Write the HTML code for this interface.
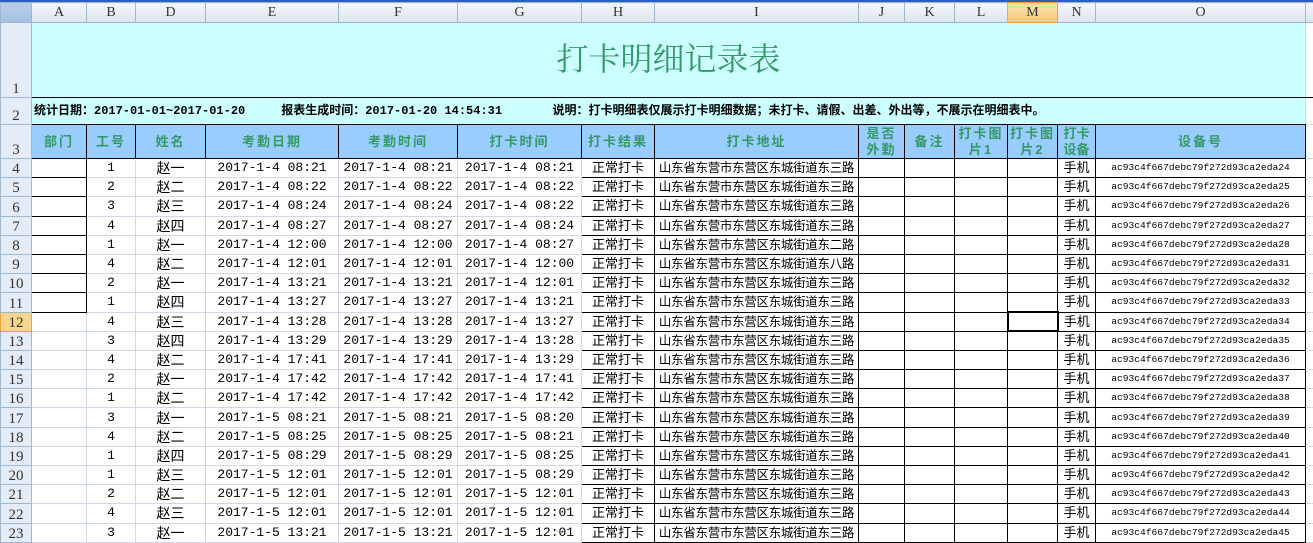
<!DOCTYPE html>
<html><head><meta charset="utf-8">
<style>
*{margin:0;padding:0;box-sizing:border-box}
body{width:1313px;height:528px;overflow:hidden;background:#fff;font-family:"Liberation Sans","Noto Sans CJK SC",sans-serif}
.top{position:absolute;left:0;top:0;width:1313px;height:2px;background:#2b5fbf}
table{position:absolute;left:0;top:2px;border-collapse:collapse;table-layout:fixed;width:1313px}
td{border:1px solid #d0d7e5;padding:0;white-space:nowrap;overflow:hidden;text-align:center;font-size:13px;color:#000;line-height:16px}
td.h{background:linear-gradient(#f4f6fa,#dde4ee);border-color:#9eb6ce;color:#333;font-family:"Liberation Serif","Noto Serif CJK SC",serif;font-size:14px;height:20px}
td.hm{background:linear-gradient(#fbe0b0,#f8c77a);border-color:#f2a23c}
td.r{background:#e4ecf7;border-color:#9eb6ce;color:#333;font-family:"Liberation Serif",serif;font-size:15px;vertical-align:bottom;text-align:center}
td.rm{background:#f9d48e;border-color:#f2a23c}
.c{background:#ccffff}
.k{border-color:#000}
.hd td.f{background:#99ccff;border:1px solid #000;color:#339966;font-weight:bold;font-size:13px;letter-spacing:2px;line-height:16px}
.m{font-family:"Liberation Mono","Noto Sans CJK SC",monospace;font-size:13px}
.z{font-family:"Liberation Sans","Noto Sans CJK SC",sans-serif;font-size:14px}
.a{font-size:12.5px;letter-spacing:-0.3px}
.id{font-family:"Liberation Mono",monospace;font-size:9.6px}
tr.d td{height:19.2px;line-height:16px}
</style></head><body>
<div class="top"></div>
<table>
<colgroup><col style="width:31px"><col style="width:55px"><col style="width:49px"><col style="width:70px"><col style="width:133px"><col style="width:119px"><col style="width:124px"><col style="width:73px"><col style="width:204px"><col style="width:46px"><col style="width:50px"><col style="width:53px"><col style="width:50px"><col style="width:38px"><col style="width:210px"><col style="width:8px"></colgroup>
<tr><td class="h" style="background:linear-gradient(#b9cde8,#a5bfe3)"></td><td class="h">A</td><td class="h">B</td><td class="h">D</td><td class="h">E</td><td class="h">F</td><td class="h">G</td><td class="h">H</td><td class="h">I</td><td class="h">J</td><td class="h">K</td><td class="h">L</td><td class="h hm">M</td><td class="h">N</td><td class="h">O</td><td class="h"></td></tr>
<tr><td class="r" style="height:75px;border-bottom-color:#9eb6ce">1</td><td colspan="14" class="c" style="border-bottom:1px solid #000;color:#339966;font-size:32px;line-height:36px;font-family:'Liberation Serif','Noto Serif CJK SC',serif;padding-bottom:3px;padding-left:0px">打卡明细记录表</td><td style="border-bottom:1px solid #000"></td></tr>
<tr><td class="r" style="height:27px">2</td><td colspan="14" class="c" style="text-align:left;font-weight:bold;font-size:12px;padding-left:2px;border-bottom:1px solid #000;font-family:'Liberation Mono','Noto Sans CJK SC',monospace">统计日期：2017-01-01~2017-01-20&nbsp;&nbsp;&nbsp;&nbsp;&nbsp;报表生成时间：2017-01-20 14:54:31&nbsp;&nbsp;&nbsp;&nbsp;&nbsp;&nbsp;&nbsp;说明：打卡明细表仅展示打卡明细数据；未打卡、请假、出差、外出等，不展示在明细表中。</td><td></td></tr>
<tr class="hd"><td class="r" style="height:34px">3</td><td class="f">部门</td><td class="f">工号</td><td class="f">姓名</td><td class="f">考勤日期</td><td class="f">考勤时间</td><td class="f">打卡时间</td><td class="f">打卡结果</td><td class="f">打卡地址</td><td class="f">是否<br>外勤</td><td class="f">备注</td><td class="f">打卡图<br>片1</td><td class="f">打卡图<br>片2</td><td class="f" style="letter-spacing:0">打卡<br>设备</td><td class="f">设备号</td><td style="border-left:1px solid #000"></td></tr>
<tr class="d"><td class="r">4</td><td class="k"></td><td class="m">1</td><td class="z">赵一</td><td class="m">2017-1-4 08:21</td><td class="m">2017-1-4 08:21</td><td class="m">2017-1-4 08:21</td><td class="k">正常打卡</td><td class="k a">山东省东营市东营区东城街道东三路</td><td class="k"></td><td class="k"></td><td class="k"></td><td class="k"></td><td class="k">手机</td><td class="k id">ac93c4f667debc79f272d93ca2eda24</td><td></td></tr>
<tr class="d"><td class="r">5</td><td class="k"></td><td class="m">2</td><td class="z">赵二</td><td class="m">2017-1-4 08:22</td><td class="m">2017-1-4 08:22</td><td class="m">2017-1-4 08:22</td><td class="k">正常打卡</td><td class="k a">山东省东营市东营区东城街道东三路</td><td class="k"></td><td class="k"></td><td class="k"></td><td class="k"></td><td class="k">手机</td><td class="k id">ac93c4f667debc79f272d93ca2eda25</td><td></td></tr>
<tr class="d"><td class="r">6</td><td class="k"></td><td class="m">3</td><td class="z">赵三</td><td class="m">2017-1-4 08:24</td><td class="m">2017-1-4 08:24</td><td class="m">2017-1-4 08:22</td><td class="k">正常打卡</td><td class="k a">山东省东营市东营区东城街道东三路</td><td class="k"></td><td class="k"></td><td class="k"></td><td class="k"></td><td class="k">手机</td><td class="k id">ac93c4f667debc79f272d93ca2eda26</td><td></td></tr>
<tr class="d"><td class="r">7</td><td class="k"></td><td class="m">4</td><td class="z">赵四</td><td class="m">2017-1-4 08:27</td><td class="m">2017-1-4 08:27</td><td class="m">2017-1-4 08:24</td><td class="k">正常打卡</td><td class="k a">山东省东营市东营区东城街道东三路</td><td class="k"></td><td class="k"></td><td class="k"></td><td class="k"></td><td class="k">手机</td><td class="k id">ac93c4f667debc79f272d93ca2eda27</td><td></td></tr>
<tr class="d"><td class="r">8</td><td class="k"></td><td class="m">1</td><td class="z">赵一</td><td class="m">2017-1-4 12:00</td><td class="m">2017-1-4 12:00</td><td class="m">2017-1-4 08:27</td><td class="k">正常打卡</td><td class="k a">山东省东营市东营区东城街道东二路</td><td class="k"></td><td class="k"></td><td class="k"></td><td class="k"></td><td class="k">手机</td><td class="k id">ac93c4f667debc79f272d93ca2eda28</td><td></td></tr>
<tr class="d"><td class="r">9</td><td class="k"></td><td class="m">4</td><td class="z">赵二</td><td class="m">2017-1-4 12:01</td><td class="m">2017-1-4 12:01</td><td class="m">2017-1-4 12:00</td><td class="k">正常打卡</td><td class="k a">山东省东营市东营区东城街道东八路</td><td class="k"></td><td class="k"></td><td class="k"></td><td class="k"></td><td class="k">手机</td><td class="k id">ac93c4f667debc79f272d93ca2eda31</td><td></td></tr>
<tr class="d"><td class="r">10</td><td class="k"></td><td class="m">2</td><td class="z">赵一</td><td class="m">2017-1-4 13:21</td><td class="m">2017-1-4 13:21</td><td class="m">2017-1-4 12:01</td><td class="k">正常打卡</td><td class="k a">山东省东营市东营区东城街道东三路</td><td class="k"></td><td class="k"></td><td class="k"></td><td class="k"></td><td class="k">手机</td><td class="k id">ac93c4f667debc79f272d93ca2eda32</td><td></td></tr>
<tr class="d"><td class="r">11</td><td class="k"></td><td class="m">1</td><td class="z">赵四</td><td class="m">2017-1-4 13:27</td><td class="m">2017-1-4 13:27</td><td class="m">2017-1-4 13:21</td><td class="k">正常打卡</td><td class="k a">山东省东营市东营区东城街道东三路</td><td class="k"></td><td class="k"></td><td class="k"></td><td class="k"></td><td class="k">手机</td><td class="k id">ac93c4f667debc79f272d93ca2eda33</td><td></td></tr>
<tr class="d"><td class="r rm">12</td><td style="border-top-color:#000"></td><td class="m">4</td><td class="z">赵三</td><td class="m">2017-1-4 13:28</td><td class="m">2017-1-4 13:28</td><td class="m">2017-1-4 13:27</td><td class="k">正常打卡</td><td class="k a">山东省东营市东营区东城街道东三路</td><td class="k"></td><td class="k"></td><td class="k"></td><td class="k" style="border:2px solid #000;box-shadow:inset 0 0 0 1px #fff"></td><td class="k">手机</td><td class="k id">ac93c4f667debc79f272d93ca2eda34</td><td></td></tr>
<tr class="d"><td class="r">13</td><td></td><td class="m">3</td><td class="z">赵四</td><td class="m">2017-1-4 13:29</td><td class="m">2017-1-4 13:29</td><td class="m">2017-1-4 13:28</td><td class="k">正常打卡</td><td class="k a">山东省东营市东营区东城街道东三路</td><td class="k"></td><td class="k"></td><td class="k"></td><td class="k"></td><td class="k">手机</td><td class="k id">ac93c4f667debc79f272d93ca2eda35</td><td></td></tr>
<tr class="d"><td class="r">14</td><td></td><td class="m">4</td><td class="z">赵二</td><td class="m">2017-1-4 17:41</td><td class="m">2017-1-4 17:41</td><td class="m">2017-1-4 13:29</td><td class="k">正常打卡</td><td class="k a">山东省东营市东营区东城街道东三路</td><td class="k"></td><td class="k"></td><td class="k"></td><td class="k"></td><td class="k">手机</td><td class="k id">ac93c4f667debc79f272d93ca2eda36</td><td></td></tr>
<tr class="d"><td class="r">15</td><td></td><td class="m">2</td><td class="z">赵一</td><td class="m">2017-1-4 17:42</td><td class="m">2017-1-4 17:42</td><td class="m">2017-1-4 17:41</td><td class="k">正常打卡</td><td class="k a">山东省东营市东营区东城街道东三路</td><td class="k"></td><td class="k"></td><td class="k"></td><td class="k"></td><td class="k">手机</td><td class="k id">ac93c4f667debc79f272d93ca2eda37</td><td></td></tr>
<tr class="d"><td class="r">16</td><td></td><td class="m">1</td><td class="z">赵二</td><td class="m">2017-1-4 17:42</td><td class="m">2017-1-4 17:42</td><td class="m">2017-1-4 17:42</td><td class="k">正常打卡</td><td class="k a">山东省东营市东营区东城街道东三路</td><td class="k"></td><td class="k"></td><td class="k"></td><td class="k"></td><td class="k">手机</td><td class="k id">ac93c4f667debc79f272d93ca2eda38</td><td></td></tr>
<tr class="d"><td class="r">17</td><td></td><td class="m">3</td><td class="z">赵一</td><td class="m">2017-1-5 08:21</td><td class="m">2017-1-5 08:21</td><td class="m">2017-1-5 08:20</td><td class="k">正常打卡</td><td class="k a">山东省东营市东营区东城街道东三路</td><td class="k"></td><td class="k"></td><td class="k"></td><td class="k"></td><td class="k">手机</td><td class="k id">ac93c4f667debc79f272d93ca2eda39</td><td></td></tr>
<tr class="d"><td class="r">18</td><td></td><td class="m">4</td><td class="z">赵二</td><td class="m">2017-1-5 08:25</td><td class="m">2017-1-5 08:25</td><td class="m">2017-1-5 08:21</td><td class="k">正常打卡</td><td class="k a">山东省东营市东营区东城街道东三路</td><td class="k"></td><td class="k"></td><td class="k"></td><td class="k"></td><td class="k">手机</td><td class="k id">ac93c4f667debc79f272d93ca2eda40</td><td></td></tr>
<tr class="d"><td class="r">19</td><td></td><td class="m">1</td><td class="z">赵四</td><td class="m">2017-1-5 08:29</td><td class="m">2017-1-5 08:29</td><td class="m">2017-1-5 08:25</td><td class="k">正常打卡</td><td class="k a">山东省东营市东营区东城街道东三路</td><td class="k"></td><td class="k"></td><td class="k"></td><td class="k"></td><td class="k">手机</td><td class="k id">ac93c4f667debc79f272d93ca2eda41</td><td></td></tr>
<tr class="d"><td class="r">20</td><td></td><td class="m">1</td><td class="z">赵三</td><td class="m">2017-1-5 12:01</td><td class="m">2017-1-5 12:01</td><td class="m">2017-1-5 08:29</td><td class="k">正常打卡</td><td class="k a">山东省东营市东营区东城街道东三路</td><td class="k"></td><td class="k"></td><td class="k"></td><td class="k"></td><td class="k">手机</td><td class="k id">ac93c4f667debc79f272d93ca2eda42</td><td></td></tr>
<tr class="d"><td class="r">21</td><td></td><td class="m">2</td><td class="z">赵二</td><td class="m">2017-1-5 12:01</td><td class="m">2017-1-5 12:01</td><td class="m">2017-1-5 12:01</td><td class="k">正常打卡</td><td class="k a">山东省东营市东营区东城街道东三路</td><td class="k"></td><td class="k"></td><td class="k"></td><td class="k"></td><td class="k">手机</td><td class="k id">ac93c4f667debc79f272d93ca2eda43</td><td></td></tr>
<tr class="d"><td class="r">22</td><td></td><td class="m">4</td><td class="z">赵三</td><td class="m">2017-1-5 12:01</td><td class="m">2017-1-5 12:01</td><td class="m">2017-1-5 12:01</td><td class="k">正常打卡</td><td class="k a">山东省东营市东营区东城街道东三路</td><td class="k"></td><td class="k"></td><td class="k"></td><td class="k"></td><td class="k">手机</td><td class="k id">ac93c4f667debc79f272d93ca2eda44</td><td></td></tr>
<tr class="d"><td class="r">23</td><td></td><td class="m">3</td><td class="z">赵一</td><td class="m">2017-1-5 13:21</td><td class="m">2017-1-5 13:21</td><td class="m">2017-1-5 12:01</td><td class="k">正常打卡</td><td class="k a">山东省东营市东营区东城街道东三路</td><td class="k"></td><td class="k"></td><td class="k"></td><td class="k"></td><td class="k">手机</td><td class="k id">ac93c4f667debc79f272d93ca2eda45</td><td></td></tr>
</table>
</body></html>
